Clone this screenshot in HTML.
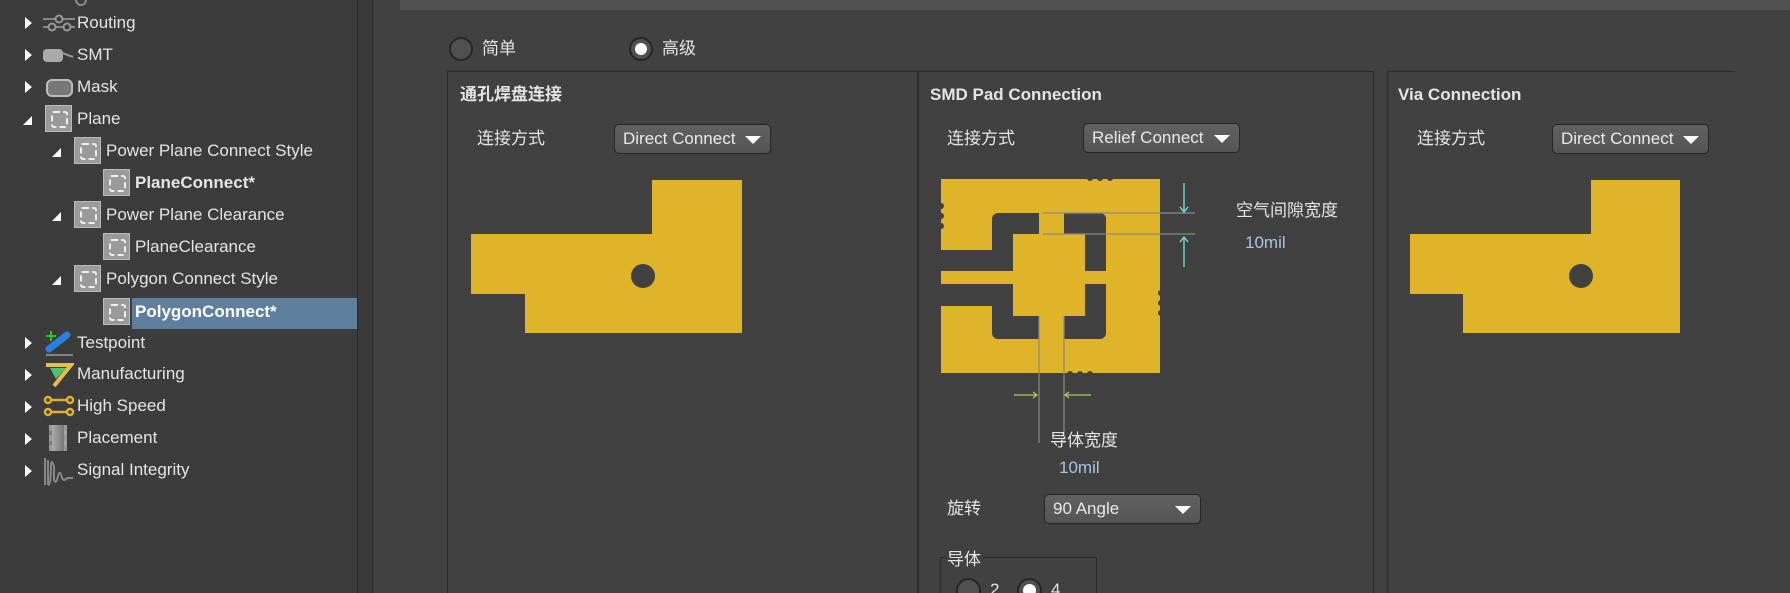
<!DOCTYPE html>
<html><head><meta charset="utf-8"><style>
*{margin:0;padding:0;box-sizing:border-box}
html,body{width:1790px;height:593px;overflow:hidden}
body{background:#414141;font-family:"Liberation Sans","Noto Sans CJK SC",sans-serif;color:#e4e4e4;position:relative}
.a{position:absolute;white-space:nowrap}
.t{font-size:17px;line-height:20px}
.tree{position:absolute;left:0;top:0;width:357px;height:593px;background:#3c3c3c}
.arr{position:absolute;width:0;height:0;border-top:6px solid transparent;border-bottom:6px solid transparent;border-left:7px solid #fff}
.exp{position:absolute;width:0;height:0;border-left:9px solid transparent;border-bottom:9px solid #fff}
.pi{position:absolute;width:27px;height:27px;background:#9a9a9a;border:1px solid #bbb}
.pi:after{content:"";position:absolute;left:5px;top:5px;width:13px;height:13px;border:2px dashed #eee;border-radius:3px}
.dd{position:absolute;height:30px;border:1px solid #262626;border-radius:5px;background:linear-gradient(#616161,#555);font-size:17px;line-height:28px;padding-left:8px;color:#e8e8e8}
.dd:after{content:"";position:absolute;right:9px;top:11px;border-left:8px solid transparent;border-right:8px solid transparent;border-top:8px solid #fff}
.panel{position:absolute;border:1px solid #2c2c2c;border-bottom:none}
.h{font-weight:bold;font-size:17px;line-height:20px}
</style></head><body>
<div class="tree">
<div class="a" style="left:75px;top:-6px;width:12px;height:12px;border:2px solid #888;border-radius:50%"></div>
<div class="arr" style="left:25px;top:17px"></div>
<svg class="a" style="left:43px;top:14px" width="32" height="18"><line x1="0" y1="5" x2="32" y2="5" stroke="#888" stroke-width="2"/><line x1="0" y1="13" x2="32" y2="13" stroke="#888" stroke-width="2"/><circle cx="16" cy="5" r="3.5" fill="#3c3c3c" stroke="#999" stroke-width="2"/><circle cx="9" cy="13" r="3.5" fill="#3c3c3c" stroke="#999" stroke-width="2"/><circle cx="24" cy="13" r="3.5" fill="#3c3c3c" stroke="#999" stroke-width="2"/></svg>
<div class="a t" style="left:77px;top:13px">Routing</div>
<div class="arr" style="left:25px;top:49px"></div>
<div class="a" style="left:43px;top:49px;width:20px;height:13px;background:#aaa;border-radius:4px"></div>
<div class="a" style="left:62px;top:54px;width:11px;height:4px;border-top:2px solid #999;transform:rotate(20deg)"></div>
<div class="a t" style="left:77px;top:45px">SMT</div>
<div class="arr" style="left:25px;top:81px"></div>
<div class="a" style="left:46px;top:79px;width:27px;height:18px;background:#777;border:2px solid #bbb;border-radius:6px"></div>
<div class="a t" style="left:77px;top:77px">Mask</div>
<div class="exp" style="left:23px;top:116px"></div>
<div class="pi" style="left:45px;top:105px"></div>
<div class="a t" style="left:77px;top:109px">Plane</div>
<div class="exp" style="left:52px;top:148px"></div>
<div class="pi" style="left:74px;top:137px"></div>
<div class="a t" style="left:106px;top:141px">Power Plane Connect Style</div>
<div class="pi" style="left:103px;top:169px"></div>
<div class="a t" style="left:135px;top:173px;font-weight:bold">PlaneConnect*</div>
<div class="exp" style="left:52px;top:212px"></div>
<div class="pi" style="left:74px;top:201px"></div>
<div class="a t" style="left:106px;top:205px">Power Plane Clearance</div>
<div class="pi" style="left:103px;top:233px"></div>
<div class="a t" style="left:135px;top:237px">PlaneClearance</div>
<div class="exp" style="left:52px;top:276px"></div>
<div class="pi" style="left:74px;top:265px"></div>
<div class="a t" style="left:106px;top:269px">Polygon Connect Style</div>
<div class="a" style="left:132px;top:298px;width:225px;height:31px;background:#5f7f9f"></div>
<div class="pi" style="left:103px;top:298px"></div>
<div class="a t" style="left:135px;top:302px;font-weight:bold;color:#fff">PolygonConnect*</div>
<div class="arr" style="left:25px;top:337px"></div>
<svg class="a" style="left:44px;top:328px" width="30" height="28"><path d="M5 21 L23 7" stroke="#2a7fe0" stroke-width="7" stroke-linecap="round"/><path d="M2 8h10M7 3v10" stroke="#2c2" stroke-width="2"/><line x1="2" y1="27" x2="29" y2="27" stroke="#ccc"/></svg>
<div class="a t" style="left:77px;top:333px">Testpoint</div>
<div class="arr" style="left:25px;top:369px"></div>
<svg class="a" style="left:44px;top:362px" width="30" height="26"><path d="M2 3 L27 3 L10 24" fill="none" stroke="#e8c040" stroke-width="4"/><path d="M6 6 L22 6 L12 17Z" fill="#4ec07a"/></svg>
<div class="a t" style="left:77px;top:364px">Manufacturing</div>
<div class="arr" style="left:25px;top:401px"></div>
<svg class="a" style="left:43px;top:394px" width="32" height="24"><g fill="none" stroke="#e0b030" stroke-width="2.5"><circle cx="5" cy="6" r="3"/><circle cx="27" cy="6" r="3"/><circle cx="5" cy="18" r="3"/><circle cx="27" cy="18" r="3"/><path d="M8 6h16M8 18h16"/></g></svg>
<div class="a t" style="left:77px;top:396px">High Speed</div>
<div class="arr" style="left:25px;top:433px"></div>
<div class="a" style="left:49px;top:425px;width:18px;height:26px;background:linear-gradient(90deg,#aaa,#777);border-left:3px dashed #999;border-right:3px dashed #999"></div>
<div class="a t" style="left:77px;top:428px">Placement</div>
<div class="arr" style="left:25px;top:465px"></div>
<svg class="a" style="left:44px;top:456px" width="30" height="30"><path d="M1 29V2 M4 29V4 M4 29 Q7 29 7 10 Q7 2 10 10 L10 24 Q12 29 14 20 Q16 13 18 22 Q20 26 23 22 L29 22" fill="none" stroke="#888" stroke-width="2"/></svg>
<div class="a t" style="left:77px;top:460px">Signal Integrity</div>
</div>
<div class="a" style="left:357px;top:0;width:1px;height:593px;background:#2a2a2a"></div>
<div class="a" style="left:358px;top:0;width:14px;height:593px;background:#3a3a3a"></div>
<div class="a" style="left:372px;top:0;width:1px;height:593px;background:#2a2a2a"></div>
<div class="a" style="left:400px;top:0;width:1390px;height:10px;background:#515151"></div>
<div class="a" style="left:449px;top:37px;width:24px;height:24px;border-radius:50%;background:#505050;border:2px solid #262626"></div>
<div class="a t" style="left:482px;top:39px">简单</div>
<div class="a" style="left:629px;top:37px;width:24px;height:24px;border-radius:50%;background:#505050;border:2px solid #262626"></div>
<div class="a" style="left:635px;top:43px;width:12px;height:12px;border-radius:50%;background:#fff"></div>
<div class="a t" style="left:662px;top:39px">高级</div>
<div class="panel" style="left:447px;top:71px;width:471px;height:530px"></div>
<div class="panel" style="left:918px;top:71px;width:456px;height:530px"></div>
<div class="panel" style="left:1387px;top:71px;width:348px;height:530px;border-right:none"></div>
<div class="a h" style="left:460px;top:85px">通孔焊盘连接</div>
<div class="a h" style="left:930px;top:85px">SMD Pad Connection</div>
<div class="a h" style="left:1398px;top:85px">Via Connection</div>
<div class="a t" style="left:477px;top:129px">连接方式</div>
<div class="a t" style="left:947px;top:129px">连接方式</div>
<div class="a t" style="left:1417px;top:129px">连接方式</div>
<div class="dd" style="left:614px;top:124px;width:157px">Direct Connect</div>
<div class="dd" style="left:1083px;top:123px;width:157px">Relief Connect</div>
<div class="dd" style="left:1552px;top:124px;width:157px">Direct Connect</div>
<svg class="a" style="left:0;top:0" width="1790" height="593">
<polygon points="652,180 742,180 742,333 525,333 525,294 471,294 471,234 652,234" fill="#e0b428"/>
<circle cx="643" cy="276" r="12" fill="#414141"/>
<polygon points="1591,180 1680,180 1680,333 1463,333 1463,294 1410,294 1410,234 1591,234" fill="#e0b428"/>
<circle cx="1581" cy="276" r="12" fill="#414141"/>
<rect x="941" y="179" width="219" height="194" fill="#e0b428"/>
<rect x="992" y="213" width="114" height="126" rx="6" fill="#414141"/>
<rect x="941" y="250" width="52" height="56" fill="#414141"/>
<rect x="1013" y="234" width="72" height="82" fill="#e0b428"/>
<rect x="1039" y="211" width="25" height="25" fill="#e0b428"/>
<rect x="1039" y="314" width="25" height="27" fill="#e0b428"/>
<rect x="941" y="271" width="74" height="13" fill="#e0b428"/>
<rect x="1083" y="271" width="25" height="13" fill="#e0b428"/>
<g fill="#414141"><circle cx="1090" cy="178" r="3"/><circle cx="1100" cy="178" r="3"/><circle cx="1110" cy="178" r="3"/><circle cx="941" cy="206" r="3"/><circle cx="941" cy="216" r="3"/><circle cx="941" cy="226" r="3"/><circle cx="1161" cy="293" r="3"/><circle cx="1161" cy="303" r="3"/><circle cx="1161" cy="313" r="3"/><circle cx="1070" cy="374" r="3"/><circle cx="1080" cy="374" r="3"/><circle cx="1090" cy="374" r="3"/></g>
<g stroke="#8a8a8a" stroke-width="1.2"><line x1="1043" y1="213" x2="1195" y2="213"/><line x1="1043" y1="234" x2="1195" y2="234"/><line x1="1039" y1="316" x2="1039" y2="443"/><line x1="1064" y1="316" x2="1064" y2="443"/></g>
<g stroke="#6fd0c0" stroke-width="1.5" fill="none"><path d="M1184 183V212M1180 207l4 5 4-5"/><path d="M1184 237V267M1180 242l4-5 4 5"/></g>
<g stroke="#a8d060" stroke-width="1.2" fill="none"><path d="M1014 395H1037M1033 392l4 3-4 3"/><path d="M1065 395H1091M1069 392l-4 3 4 3"/></g>
</svg>
<div class="a t" style="left:1236px;top:201px">空气间隙宽度</div>
<div class="a t" style="left:1245px;top:233px;color:#a9c4e2">10mil</div>
<div class="a t" style="left:1050px;top:431px">导体宽度</div>
<div class="a t" style="left:1059px;top:458px;color:#a9c4e2">10mil</div>
<div class="a t" style="left:947px;top:499px">旋转</div>
<div class="dd" style="left:1044px;top:494px;width:157px">90 Angle</div>
<div class="a" style="left:940px;top:557px;width:157px;height:40px;border:1px solid #2a2a2a;border-bottom:none"></div>
<div class="a t" style="left:945px;top:550px;background:#414141;padding:0 2px">导体</div>
<div class="a" style="left:956px;top:578px;width:25px;height:25px;border-radius:50%;background:#505050;border:2px solid #262626"></div>
<div class="a t" style="left:990px;top:580px">2</div>
<div class="a" style="left:1017px;top:578px;width:25px;height:25px;border-radius:50%;background:#505050;border:2px solid #262626"></div>
<div class="a" style="left:1023px;top:584px;width:13px;height:13px;border-radius:50%;background:#fff"></div>
<div class="a t" style="left:1051px;top:580px">4</div>
</body></html>
